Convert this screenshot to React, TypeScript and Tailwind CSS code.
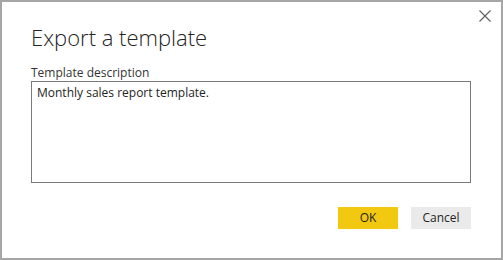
import { useState } from "react";

function App() {
  const [description, setDescription] = useState("Monthly sales report template.");

  return (
    <div className="w-[503px] h-[260px] bg-white border-2 border-[#a6a6a6] flex flex-col font-['Segoe_UI','Open_Sans',sans-serif] text-[#252423]">
      {/* Close button row */}
      <div className="flex justify-end pt-[6px] pr-[8px] h-[20px]">
        <button className="w-[16px] h-[16px] flex items-center justify-center text-[#605e5c]">
          <svg width="12" height="12" viewBox="0 0 12 12" stroke="currentColor" strokeWidth="1.1" fill="none">
            <path d="M0.5 0.5 L11.5 11.5 M11.5 0.5 L0.5 11.5" />
          </svg>
        </button>
      </div>

      <div className="px-[29px] flex flex-col">
        <h1 className="text-[22px] font-light leading-[28px] mt-[1px] text-[#252423]">
          Export a template
        </h1>

        <label htmlFor="desc" className="text-[12px] leading-[16px] mt-[14px] text-[#333]">
          Template description
        </label>
        <textarea
          id="desc"
          value={description}
          onChange={(e) => setDescription(e.target.value)}
          className="w-[440px] h-[102px] border border-[#7a7a7a] px-[5px] py-[3px] text-[12px] leading-[16px] resize-none outline-none text-[#252423]"
        />

        <div className="flex justify-end gap-[13px] mt-[24px] pr-[1px]">
          <button className="w-[60px] h-[22px] bg-[#f2c811] text-[12px] text-[#252423]">
            OK
          </button>
          <button className="w-[60px] h-[22px] bg-[#eaeaea] text-[12px] text-[#252423]">
            Cancel
          </button>
        </div>
      </div>
    </div>
  );
}

export default App;
